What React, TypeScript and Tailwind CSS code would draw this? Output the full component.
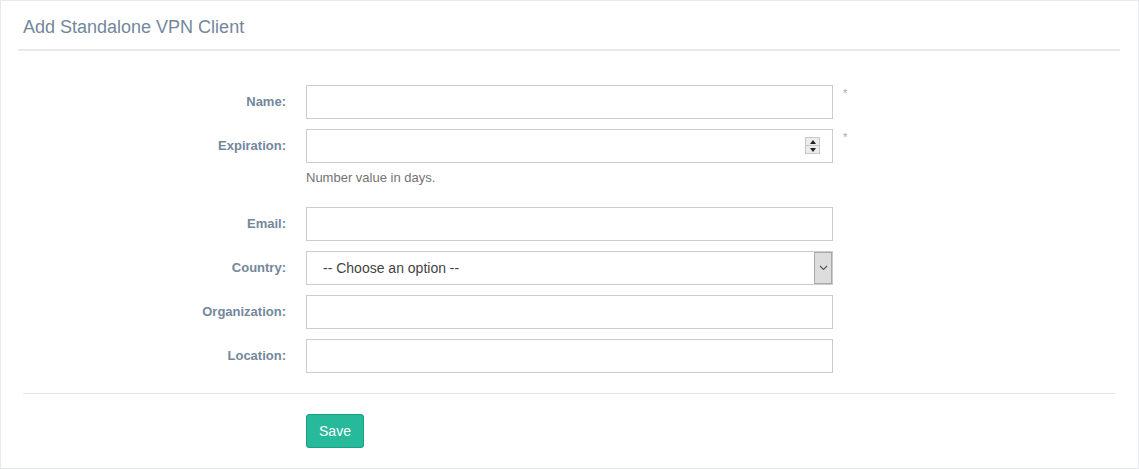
import React from "react";

const labelCls =
  "w-[268px] shrink-0 text-right text-[13px] font-bold text-[#73879c] pr-0";

function Field({
  label,
  required,
  children,
  help,
}: {
  label: string;
  required?: boolean;
  children: React.ReactNode;
  help?: string;
}) {
  return (
    <div className="mb-[10px]">
      <div className="flex items-start">
        <div className={labelCls + " h-[34px] flex items-center justify-end"}>{label}</div>
        <div className="ml-[20px] w-[527px]">{children}</div>
        {required && (
          <span className="ml-[10px] mt-[2px] text-[11px] leading-[12px] text-[#9aa8bb]">*</span>
        )}
      </div>
      {help && (
        <div className="ml-[288px] pt-[5px] pb-[10px]">
          <div className="h-[19px] text-[13px] leading-[19px] text-[#737373]">{help}</div>
        </div>
      )}
    </div>
  );
}

function TextInput() {
  return <input className="w-[527px] h-[34px] border border-[#ccc] bg-white px-3 outline-none" />;
}

export default function App() {
  return (
    <div
      className="w-[1139px] h-[469px] bg-white border border-[#e6e9ed] pl-[17px] pr-[18px] pt-[10px]"
      style={{ fontFamily: '"Liberation Sans", Arial, sans-serif' }}
    >
      {/* Title */}
      <div className="h-[40px] border-b-2 border-[#e6e9ed] px-[5px] pt-[6px]">
        <h2 className="text-[18px] leading-[20px] text-[#73879c]">Add Standalone VPN Client</h2>
      </div>

      {/* Form */}
      <div className="mt-[34px]">
        <Field label="Name:" required>
          <TextInput />
        </Field>
        <Field label="Expiration:" required help="Number value in days.">
          <div className="relative w-[527px] h-[34px] border border-[#ccc] bg-white">
            <div className="absolute left-[498px] top-[7px] w-[15px] h-[17px] border border-[#c8c8c8] bg-[#ececec] flex flex-col">
              <div className="flex-1 flex items-center justify-center border-b border-[#c8c8c8]">
                <div className="w-0 h-0 border-l-[3.5px] border-r-[3.5px] border-b-[4px] border-l-transparent border-r-transparent border-b-[#222]" />
              </div>
              <div className="flex-1 flex items-center justify-center">
                <div className="w-0 h-0 border-l-[3.5px] border-r-[3.5px] border-t-[4px] border-l-transparent border-r-transparent border-t-[#222]" />
              </div>
            </div>
          </div>
        </Field>
        <Field label="Email:">
          <TextInput />
        </Field>
        <Field label="Country:">
          <div className="w-[527px] h-[34px] border border-[#ccc] bg-white flex items-stretch">
            <div className="flex-1 flex items-center pl-[16px] text-[14px] text-[#444]">
              -- Choose an option --
            </div>
            <div className="w-[18px] bg-[#dddddd] border border-[#a9a9a9] flex items-center justify-center">
              <svg width="9" height="6" viewBox="0 0 9 6">
                <path d="M1 1 L4.5 4.5 L8 1" fill="none" stroke="#555" strokeWidth="1.1" />
              </svg>
            </div>
          </div>
        </Field>
        <Field label="Organization:">
          <TextInput />
        </Field>
        <Field label="Location:">
          <TextInput />
        </Field>
      </div>

      {/* Divider */}
      <div className="mx-[5px] mt-[20px] h-px bg-[#e5e5e5]" />

      {/* Actions */}
      <div className="mt-[20px] ml-[288px]">
        <button className="w-[58px] h-[34px] rounded-[3px] bg-[#26b99a] border border-[#169f85] text-white text-[14px]">
          Save
        </button>
      </div>
    </div>
  );
}
